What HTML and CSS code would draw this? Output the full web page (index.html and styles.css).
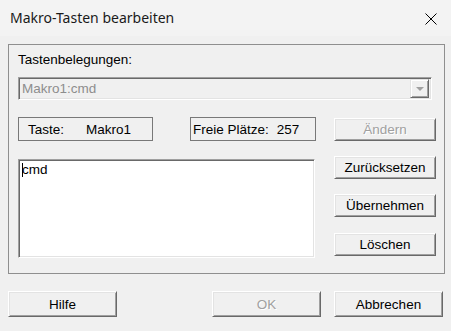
FILE: index.html
```html
<!DOCTYPE html>
<html lang="de">

<head>
    <meta charset="UTF-8">
    <title>Makro-Tasten bearbeiten</title>
    <link rel="stylesheet" href="styles.css">
</head>

<body>
    <div class="titlebar">
        <span class="title">Makro-Tasten bearbeiten</span>
        <svg class="close" width="12" height="12" viewBox="0 0 12 12">
            <path d="M0.5 0.5 L11.5 11.5 M11.5 0.5 L0.5 11.5" stroke="#000" stroke-width="1" fill="none" />
        </svg>
    </div>

    <div class="dialog">
        <div class="group">
            <div class="label">Tastenbelegungen:</div>

            <div class="combo">
                <span class="combo-text">Makro1:cmd</span>
                <span class="combo-btn"><span class="arrow"></span></span>
            </div>

            <div class="row">
                <div class="static taste">
                    <span>Taste:</span>
                    <span class="taste-value">Makro1</span>
                </div>
                <div class="static frei">
                    <span>Freie Plätze:</span>
                    <span class="frei-value">257</span>
                </div>
                <button class="btn disabled side">Ändern</button>
            </div>

            <div class="lower">
                <div class="edit"><span class="caret"></span>cmd</div>
                <div class="side-buttons">
                    <button class="btn side">Zurücksetzen</button>
                    <button class="btn side">Übernehmen</button>
                    <button class="btn side">Löschen</button>
                </div>
            </div>
        </div>

        <div class="footer">
            <button class="btn wide">Hilfe</button>
            <button class="btn wide disabled ok">OK</button>
            <button class="btn wide cancel">Abbrechen</button>
        </div>
    </div>
</body>

</html>
```

FILE: styles.css
```css
body {
    margin: 0;
    width: 451px;
    height: 331px;
    background: #f0f0f0;
    font-family: "Liberation Sans", Arial, sans-serif;
    font-size: 13.5px;
    color: #000;
    overflow: hidden;
}

.titlebar {
    height: 36px;
    background: #f3f3f3;
    display: flex;
    align-items: center;
    justify-content: space-between;
    padding: 0 14px 0 10px;
}

.title {
    font-family: "Noto Sans", "Open Sans", sans-serif;
    font-size: 14px;
    color: #1a1a1a;
    margin-top: -1px;
}

.close {
    display: block;
    margin-top: 1px;
}

.dialog {
    padding: 8px 0 0 8px;
}

/* Rahmen um die Makro-Felder */
.group {
    width: 437px;
    height: 230px;
    box-sizing: border-box;
    border: 1px solid #8f8f8f;
    padding: 7px 0 0 9px;
}

.label {
    line-height: 16px;
}

.combo {
    margin-top: 9px;
    width: 414px;
    height: 23px;
    box-sizing: border-box;
    border-top: 1px solid #a0a0a0;
    border-left: 1px solid #a0a0a0;
    border-bottom: 1px solid #fff;
    border-right: 1px solid #fff;
    box-shadow: inset 1px 1px 0 #696969, inset -1px -1px 0 #e3e3e3;
    display: flex;
    align-items: center;
    justify-content: space-between;
    padding: 0 2px 0 3px;
}

.combo-text {
    color: #8d8d8d;
}

.combo-btn {
    width: 19px;
    height: 19px;
    box-sizing: border-box;
    border-top: 1px solid #e3e3e3;
    border-left: 1px solid #e3e3e3;
    border-bottom: 1px solid #696969;
    border-right: 1px solid #696969;
    box-shadow: inset 1px 1px 0 #fff, inset -1px -1px 0 #a0a0a0;
    display: flex;
    align-items: center;
    justify-content: center;
}

.arrow {
    width: 0;
    height: 0;
    border-left: 4px solid transparent;
    border-right: 4px solid transparent;
    border-top: 4px solid #a0a0a0;
    margin-top: 1px;
}

.row {
    display: flex;
    align-items: flex-start;
    margin-top: 17px;
}

.static {
    height: 24px;
    box-sizing: border-box;
    border: 1px solid #787878;
    display: flex;
    align-items: center;
}

.taste {
    width: 135px;
    padding-left: 9px;
}

.taste-value {
    margin-left: 22px;
}

.frei {
    width: 126px;
    margin-left: 37px;
    padding-left: 2px;
}

.frei-value {
    margin-left: 8px;
}

.btn {
    font-family: "Liberation Sans", Arial, sans-serif;
    font-size: 13.5px;
    color: #000;
    background: #f0f0f0;
    box-sizing: border-box;
    border-top: 1px solid #fff;
    border-left: 1px solid #fff;
    border-bottom: 1px solid #696969;
    border-right: 1px solid #696969;
    box-shadow: inset 1px 1px 0 #e3e3e3, inset -1px -1px 0 #a0a0a0;
    padding: 0;
    margin: 0;
}

.btn.disabled {
    color: #a0a0a0;
    text-shadow: 1px 1px 0 #fff;
}

.side {
    width: 102px;
    height: 23px;
}

.row .side {
    margin-left: 18px;
    margin-top: 1px;
}

.lower {
    display: flex;
    align-items: flex-start;
    margin-top: 15px;
}

.edit {
    width: 297px;
    height: 99px;
    margin-top: 3px;
    box-sizing: border-box;
    background: #fff;
    border-top: 1px solid #a0a0a0;
    border-left: 1px solid #a0a0a0;
    border-bottom: 1px solid #fff;
    border-right: 1px solid #fff;
    box-shadow: inset 1px 1px 0 #696969, inset -1px -1px 0 #e3e3e3;
    padding: 2px 0 0 3px;
    line-height: 16px;
}

.caret {
    display: inline-block;
    width: 1px;
    height: 14px;
    background: #000;
    vertical-align: -3px;
    margin-right: -1px;
}

.side-buttons {
    display: flex;
    flex-direction: column;
    gap: 15px;
    margin-left: 19px;
}

.side-buttons .side:last-child {
    margin-top: 1px;
}

.footer {
    display: flex;
    margin-top: 17px;
}

.wide {
    width: 109px;
    height: 26px;
}

.ok {
    margin-left: 95px;
}

.cancel {
    margin-left: 13px;
}
```
